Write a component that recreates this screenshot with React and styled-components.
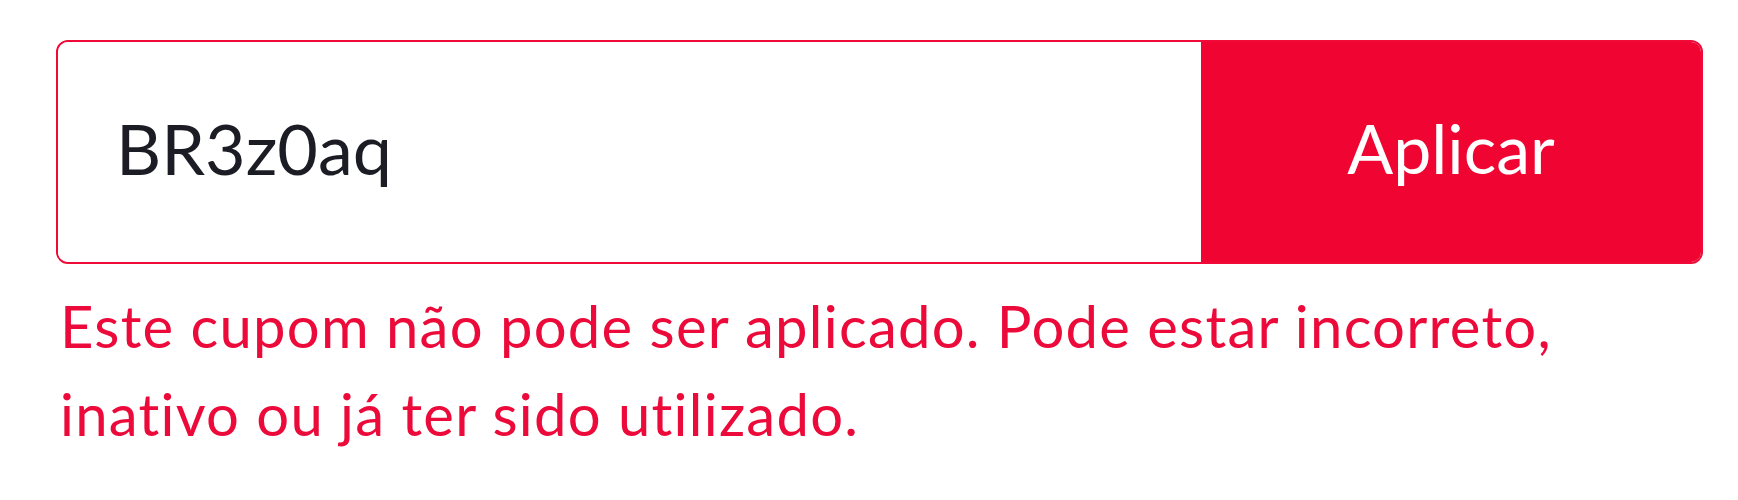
import React from "react";
import styled, { createGlobalStyle } from "styled-components";

const Global = createGlobalStyle`
  html, body { margin: 0; padding: 0; background: #ffffff; }
  body { font-family: "Lato", "Noto Sans", sans-serif; font-variant-ligatures: none; }
`;

const Page = styled.div`
  padding: 40px 0 0 56px;
  width: 1647px;
`;

const Form = styled.form`
  display: flex;
  height: 224px;
  box-sizing: border-box;
  border: 2px solid #ef0a37;
  border-radius: 12px;
  overflow: hidden;
`;

const Input = styled.input`
  flex: 1;
  min-width: 0;
  border: none;
  outline: none;
  padding: 0 0 8px 58px;
  font-family: "Lato", sans-serif;
  font-size: 70px;
  color: #1c1c24;
  background: #ffffff;
  font-variant-ligatures: none;
`;

const Button = styled.button`
  width: 500px;
  border: none;
  background: #f00432;
  color: #ffffff;
  font-family: "Lato", sans-serif;
  font-size: 68px;
  padding: 0 0 10px 0;
  cursor: pointer;
`;

const ErrorText = styled.p`
  margin: 18px 0 0 4px;
  max-width: 1600px;
  font-family: "Lato", sans-serif;
  font-size: 58px;
  letter-spacing: 1.25px;
  line-height: 88px;
  color: #ec0a3a;
  font-variant-ligatures: none;
`;

export default function App() {
  return (
    <>
      <Global />
      <Page>
        <Form onSubmit={(e) => e.preventDefault()}>
          <Input defaultValue="BR3z0aq" />
          <Button type="submit">Aplicar</Button>
        </Form>
        <ErrorText>
          Este cupom não pode ser aplicado. Pode estar incorreto, inativo ou já ter sido utilizado.
        </ErrorText>
      </Page>
    </>
  );
}
